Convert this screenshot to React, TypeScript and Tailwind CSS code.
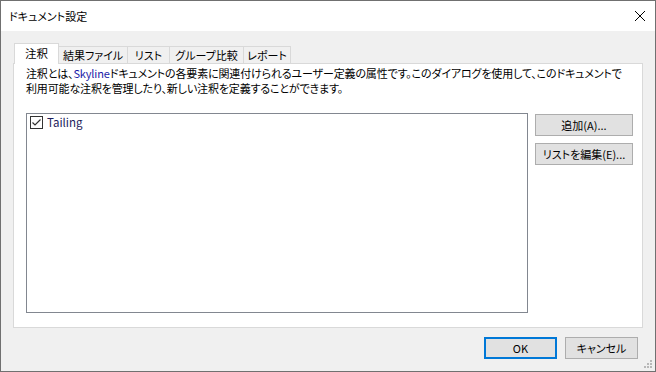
const font = "font-['Yu_Gothic_UI','Meiryo_UI','Noto_Sans_CJK_JP',sans-serif] [font-feature-settings:'palt']";

const Tab: React.FC<{ label: string; active?: boolean; w: string }> = ({ label, active, w }) =>
  active ? (
    <div className={`${w} h-[21px] -mb-px bg-white border border-b-0 border-[#d9d9d9] flex items-start justify-center pt-[1px] text-[11.5px] z-10`}>
      {label}
    </div>
  ) : (
    <div className={`${w} h-[18px] mt-[3px] -ml-px bg-[#f0f0f0] border border-b-0 border-[#d9d9d9] flex items-center justify-center text-[11px] whitespace-nowrap`}>
      {label}
    </div>
  );

const Btn: React.FC<{ children: React.ReactNode; w: string; primary?: boolean }> = ({ children, w, primary }) => (
  <div
    className={`${w} h-[22px] flex items-center justify-center bg-[#e1e1e1] text-[11px] whitespace-nowrap ${
      primary ? "border-2 border-[#0078d7]" : "border border-[#adadad]"
    }`}
  >
    {children}
  </div>
);

export default function App() {
  return (
    <div className={`${font} w-[656px] h-[372px] border border-[#707070] bg-[#f0f0f0] flex flex-col relative text-black`}>
      {/* title bar */}
      <div className="h-[30px] bg-white flex items-center justify-between pl-[8px] pr-[9px]">
        <span className="text-[11px]">ドキュメント設定</span>
        <svg width="12" height="12" viewBox="0 0 12 12">
          <path d="M1 1L11 11M11 1L1 11" stroke="#000" strokeWidth="1" />
        </svg>
      </div>

      <div className="flex-1 flex flex-col px-[12px] pt-[12px]">
        {/* tabs */}
        <div className="flex items-start h-[20px] pl-[1px]">
          <Tab label="注釈" active w="w-[45px]" />
          <Tab label="結果ファイル" w="w-[70px]" />
          <Tab label="リスト" w="w-[43px]" />
          <Tab label="グループ比較" w="w-[75px]" />
          <Tab label="レポート" w="w-[48px]" />
        </div>

        {/* panel */}
        <div className="h-[265px] bg-white border border-[#d9d9d9] flex flex-col pl-[12px] pr-[8px] pt-[2px]">
          <div className="text-[11px] leading-[15px] whitespace-nowrap tracking-[-0.15px]">
            <div>
              注釈とは、<span className="text-[#1a1aa8]">Skyline</span>
              ドキュメントの各要素に関連付けられるユーザー定義の属性です。このダイアログを使用して、このドキュメントで
            </div>
            <div>利用可能な注釈を管理したり、新しい注釈を定義することができます。</div>
          </div>
          <div className="flex gap-[7px] mt-[17px]">
            <div className="w-[502px] h-[200px] border border-[#828790] pl-[3px] pt-[1px]">
              <div className="flex items-center gap-[4px] h-[15px]">
                <div className="w-[13px] h-[13px] border border-[#333] bg-white flex items-center justify-center">
                  <svg width="11" height="11" viewBox="0 0 11 11">
                    <path d="M1.5 5.5L4 8L9.5 2.5" stroke="#333" strokeWidth="1.2" fill="none" />
                  </svg>
                </div>
                <span className="text-[11.5px] text-[#1c1c5c]">Tailing</span>
              </div>
            </div>
            <div className="flex flex-col gap-[7px] pt-[1px]">
              <Btn w="w-[98px]">追加(A)...</Btn>
              <Btn w="w-[98px]">リストを編集(E)...</Btn>
            </div>
          </div>
        </div>

        {/* footer */}
        <div className="flex justify-end gap-[8px] pt-[9px] pr-[5px]">
          <Btn w="w-[73px]" primary>
            OK
          </Btn>
          <Btn w="w-[73px]">キャンセル</Btn>
        </div>
      </div>

      {/* resize grip */}
      <svg className="absolute right-[3px] bottom-[3px]" width="8" height="8" viewBox="0 0 8 8">
        <rect x="6" y="0" width="2" height="2" fill="#b8b8b8" />
        <rect x="3" y="3" width="2" height="2" fill="#b8b8b8" />
        <rect x="6" y="3" width="2" height="2" fill="#b8b8b8" />
        <rect x="0" y="6" width="2" height="2" fill="#b8b8b8" />
        <rect x="3" y="6" width="2" height="2" fill="#b8b8b8" />
        <rect x="6" y="6" width="2" height="2" fill="#b8b8b8" />
      </svg>
    </div>
  );
}
